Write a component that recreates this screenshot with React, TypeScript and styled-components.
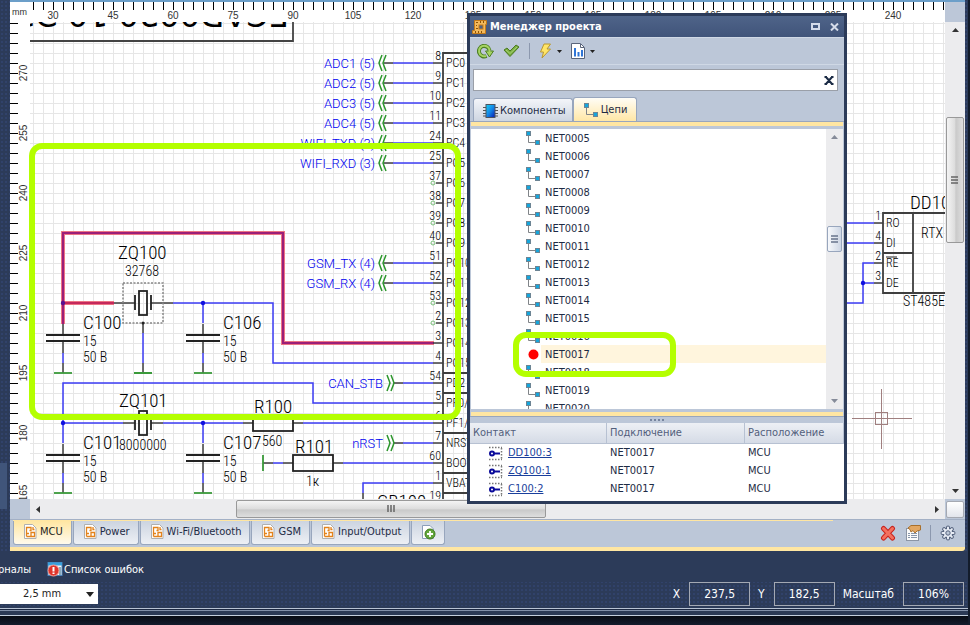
import React from "react";
import styled, { createGlobalStyle, css } from "styled-components";

const UI_FONT = `"DejaVu Sans Condensed", "Noto Sans", "DejaVu Sans", sans-serif`;
const CAD_FONT = `"Roboto Condensed", "Liberation Sans", sans-serif`;
const NET_FONT = `Roboto, "Liberation Sans", sans-serif`;

const GlobalStyle = createGlobalStyle`
  * { box-sizing: border-box; }
  body { margin: 0; background: #2c3b59; font: 11px/16px ${UI_FONT}; color: #1e2b45; overflow: hidden; }
  button, input, select { font: inherit; color: inherit; }
  button { padding: 0; border: 0; background: none; }
  svg { display: block; flex: none; }
`;

/* ---------- application frame ---------- */

const Frame = styled.div`
  position: relative;
  display: flex;
  flex-direction: column;
  height: 100vh;
  padding-left: 10px;
  border-right: 2px solid #131c2b;
  background-color: #2c3b59;
  background-image: radial-gradient(#31426a 1px, transparent 1px);
  background-size: 4px 4px;
  overflow: hidden;
`;

const Workspace = styled.main`
  flex: 1;
  min-height: 0;
  margin-right: 3px;
  display: grid;
  grid-template-columns: 20px minmax(0, 1fr) 20px;
  grid-template-rows: 20px minmax(0, 1fr) 20px;
  border-top: 2px solid #6c9fc9;
  background: #fff;
`;

const Unit = styled.div`
  font: 9px/20px "Liberation Sans", sans-serif;
  color: #333;
  padding-left: 2px;
`;

const Cell = styled.div`
  min-width: 0;
  min-height: 0;
  overflow: hidden;
`;

const Corner = styled.div`
  background: #bcc7d8;
  padding: 2px 1px 1px;
`;

const CornerButton = styled.div`
  height: 100%;
  border: 1px solid #a5a9b2;
  border-radius: 2px;
  background: linear-gradient(#fff, #e2e5ec);
`;

const Fill = styled.svg`
  width: 100%;
  height: 100%;
`;

/* ---------- scrollbars ---------- */

const Track = styled.div<{ $vertical?: boolean }>`
  display: flex;
  flex-direction: ${(p) => (p.$vertical ? "column" : "row")};
  background: #ececee;
  min-width: 0;
  min-height: 0;
  ${(p) => (p.$vertical ? "padding: 0 1px;" : "padding: 1px 0;")}
`;

const ArrowButton = styled.button`
  flex: 0 0 17px;
  display: flex;
  align-items: center;
  justify-content: center;
`;

const Gap = styled.div<{ $grow: number }>`
  flex: ${(p) => p.$grow} 1 0;
`;

const Thumb = styled.div<{ $grow: number; $vertical?: boolean; $cool?: boolean }>`
  flex: ${(p) => p.$grow} 1 0;
  display: flex;
  align-items: center;
  justify-content: center;
  border: 1px solid ${(p) => (p.$cool ? "#98a6bd" : "#999")};
  border-radius: 2px;
  background: linear-gradient(
    ${(p) => (p.$vertical ? "to right" : "to bottom")},
    ${(p) => (p.$cool ? "#f7f9fc, #cdd6e4" : "#f4f4f4, #dcdcdc 50%, #c9c9c9 55%, #dedede")}
  );
`;

type Dir = "up" | "down" | "left" | "right";
const ARROWS: Record<Dir, string> = {
  up: "M1 6L4.500 2L8 6Z",
  down: "M1 3L4.500 7L8 3Z",
  left: "M6 1L2 4.500L6 8Z",
  right: "M3 1L7 4.500L3 8Z",
};

function ScrollBar(props: { vertical?: boolean; cool?: boolean; parts: [number, number, number] }) {
  const { vertical, cool, parts } = props;
  const color = cool ? "#858b99" : "#333";
  const arrow = (d: Dir) => (
    <ArrowButton aria-label={`Scroll ${d}`}>
      <svg width="9" height="9"><path d={ARROWS[d]} fill={color} /></svg>
    </ArrowButton>
  );
  return (
    <Track $vertical={vertical}>
      {arrow(vertical ? "up" : "left")}
      <Gap $grow={parts[0]} />
      <Thumb $grow={parts[1]} $vertical={vertical} $cool={cool}>
        <svg width="8" height="8">
          <path
            d={vertical ? "M0 1H7M0 4H7M0 7H7" : "M1 0V7M4 0V7M7 0V7"}
            stroke={cool ? "#67748c" : "#666"}
            strokeWidth="1.500"
          />
        </svg>
      </Thumb>
      <Gap $grow={parts[2]} />
      {arrow(vertical ? "down" : "right")}
    </Track>
  );
}

/* ---------- rulers ---------- */

const RulerText = styled.text`
  font: 10px "Liberation Sans", sans-serif;
  fill: #333;
  text-anchor: middle;
`;

const range = (n: number) => Array.from({ length: n }, (_, i) => i);

function TopRuler() {
  return (
    <Fill>
      {range(92).map((i) => (
        <rect key={i} x={3 + i * 10} y="0" width="1" height="8" fill="#000" />
      ))}
      {range(15).map((i) => (
        <RulerText key={i} x={23 + i * 60} y="17">{30 + i * 15}</RulerText>
      ))}
    </Fill>
  );
}

function LeftRuler() {
  return (
    <Fill>
      {range(48).map((i) => (
        <rect key={i} x="0" y={1 + i * 10} width="8" height="1" fill="#000" />
      ))}
      {range(8).map((i) => (
        <RulerText key={i} transform={`translate(17 ${51 + i * 60}) rotate(-90)`}>{270 - i * 15}</RulerText>
      ))}
    </Fill>
  );
}

/* ---------- schematic ---------- */

const Label = styled.text<{ $size?: number; $net?: boolean; $end?: boolean }>`
  font-family: ${(p) => (p.$net ? NET_FONT : CAD_FONT)};
  font-size: ${(p) => p.$size ?? 14}px;
  font-weight: 300;
  fill: ${(p) => (p.$net ? "#0000f0" : "#000")};
  text-anchor: ${(p) => (p.$end ? "end" : "start")};
`;

const StampText = styled.text`
  font: 32px "DejaVu Sans", sans-serif;
  fill: #000;
`;

const PINS: [number, string, string, boolean][] = [
  [63, "8", "PC0", false], [83, "9", "PC1", false], [103, "10", "PC2", false], [123, "11", "PC3", false],
  [143, "24", "PC4", false], [163, "25", "PC5", false], [183, "37", "PC6", true], [203, "38", "PC7", true],
  [223, "39", "PC8", true], [243, "40", "PC9", true], [263, "51", "PC10", false], [283, "52", "PC11", false],
  [303, "53", "PC12", true], [323, "2", "PC13", true], [343, "3", "PC14", false], [363, "4", "PC15", false],
  [383, "54", "PD2", false], [403, "5", "PF0/", false], [423, "6", "PF1/", false], [443, "7", "NRST", false],
  [463, "60", "BOOT", false], [483, "1", "VBAT", false], [503, "19", "", false],
];

const INPUTS: [number, string][] = [
  [63, "ADC1 (5)"], [83, "ADC2 (5)"], [103, "ADC3 (5)"], [123, "ADC4 (5)"],
  [143, "WIFI_TXD (3)"], [163, "WIFI_RXD (3)"], [263, "GSM_TX (4)"], [283, "GSM_RX (4)"],
];

const CAPS: [number, number, string][] = [
  [63, 303, "C100"], [203, 303, "C106"], [63, 423, "C101"], [203, 423, "C107"],
];

const WIRE = "#3c3cf5";
const LEAD = "#3f3f3f";

function Capacitor({ x, y, name }: { x: number; y: number; name: string }) {
  const hot = name === "C100";
  return (
    <g>
      <path
        d={`${hot ? "" : `M${x} ${y}V${y + 20}`}M${x} ${y + 50}V${y + 60}`}
        stroke={WIRE}
        strokeWidth="1.500"
      />
      <path d={`M${x} ${y + 21}V${y + 32}M${x} ${y + 38}V${y + 50}M${x} ${y + 60}V${y + 70}`} stroke={LEAD} strokeWidth="1.500" />
      <path d={`M${x - 17} ${y + 32}h34M${x - 17} ${y + 38}h34`} stroke="#222" strokeWidth="1.800" />
      <path d={`M${x - 9} ${y + 70}h18`} stroke="#3a9a3a" strokeWidth="1.800" />
      <Label x={x + 20} y={y + 26} $size={19}>{name}</Label>
      <Label x={x + 20} y={y + 43}>15</Label>
      <Label x={x + 20} y={y + 59}>50 В</Label>
    </g>
  );
}

function Crystal({ y }: { y: number }) {
  return (
    <g stroke="#222" fill="none" strokeWidth="1.800">
      <path d={`M135 ${y - 8}v15M151 ${y - 8}v15`} />
      <rect x="139" y={y - 12} width="8" height="24" />
    </g>
  );
}

function Schematic() {
  return (
    <Fill>
      <defs>
        <pattern id="grid" width="10" height="10" patternUnits="userSpaceOnUse" x="3" y="1">
          <path d="M0 0.500H10M0.500 0V10" stroke="#e6e6e6" fill="none" />
        </pattern>
      </defs>
      <rect width="100%" height="100%" fill="url(#grid)" />
      <g transform="translate(-30 -22)" fill="none">
        <path d="M30 41H293V22" stroke="#444" strokeWidth="1.800" />
        <StampText transform="translate(289 4) rotate(180)">ЕСАD0020 10 ЭЗ</StampText>

        {/* nets */}
        <g stroke={WIRE} strokeWidth="1.500">
          <path d="M173 303H273V363H433M143 333V363" />
          <path d="M63 423V383H313V403H433M63 423H123M163 423H243M303 423H433" />
          <path d="M273 463H283M343 463H433M403 443H433M403 383H433M433 483H363V493" />
          {INPUTS.map(([y]) => <path key={y} d={`M393 ${y}H433`} />)}
          <path d="M840 223H874M840 243H874M874 263H863V303H840M863 283H874" />
        </g>
        <g stroke="#ed7484" strokeWidth="4">
          <path d="M63 324V233H283V343H434M63 303H114" />
        </g>
        <path d="M63 324V233H283V343H434" stroke="#9c1f78" strokeWidth="2" />
        <path d="M63 303H114" stroke="#c4285c" strokeWidth="2" />

        {/* leads */}
        <g stroke={LEAD} strokeWidth="1.500">
          <path d="M114 303H135M151 303H173M143 323V333M143 363V373" />
          <path d="M123 423H135M151 423H163M243 423H253M293 423H303" />
          <path d="M263 463H273M283 463H293M333 463H343M394 443H403M394 383H403M363 493V503" />
          {INPUTS.map(([y]) => <path key={y} d={`M384 ${y}H393`} />)}
          {PINS.map(([y, , , nc]) => <path key={y} d={`M${nc ? 436 : 433} ${y}H443`} />)}
          <path d="M874 223H883M874 243H883M874 263H883M874 283H883" />
        </g>
        <path d="M134 373H152M263 455V471" stroke="#3a9a3a" strokeWidth="1.800" />
        <rect x="123" y="283" width="40" height="40" stroke="#888" strokeWidth="1.500" strokeDasharray="2 1.500" />
        <Crystal y={303} />
        <Crystal y={423} />
        {CAPS.map(([x, y, name]) => <Capacitor key={name} x={x} y={y} name={name} />)}
        <g stroke="#222" strokeWidth="1.800">
          <rect x="253" y="415" width="40" height="16" />
          <rect x="293" y="455" width="40" height="16" />
        </g>
        <g fill="#1010e0">
          <circle cx="203" cy="303" r="2.200" />
          <circle cx="63" cy="423" r="2.200" />
          <circle cx="203" cy="423" r="2.200" />
          <circle cx="863" cy="283" r="2.200" />
          <circle cx="63" cy="303" r="2.200" fill="#5a1090" />
        </g>
        <circle cx="143" cy="323" r="1.500" fill="#222" />

        {/* off-sheet connectors */}
        <g stroke="#2c962c" strokeWidth="1.500">
          {INPUTS.map(([y]) => (
            <path key={y} d={`M382 ${y - 8}Q380 ${y - 3} 379 ${y}Q380 ${y + 3} 382 ${y + 8}M386 ${y - 8}Q384 ${y - 3} 383 ${y}Q384 ${y + 3} 386 ${y + 8}`} />
          ))}
          {[383, 443].map((y) => (
            <path key={y} d={`M387 ${y - 8}Q389 ${y - 3} 390 ${y}Q389 ${y + 3} 387 ${y + 8}M391 ${y - 8}Q393 ${y - 3} 394 ${y}Q393 ${y + 3} 391 ${y + 8}`} />
          ))}
        </g>
        {INPUTS.map(([y, name]) => <Label key={name} x="375" y={y + 5} $size={13} $net $end>{name}</Label>)}
        <Label x="383" y="388" $size={13} $net $end>CAN_STB</Label>
        <Label x="383" y="448" $size={13} $net $end>nRST</Label>

        {/* controller */}
        <path d="M500 53H443V520M443 373H500M443 393H500M443 433H500M443 473H500M443 493H500" stroke={LEAD} strokeWidth="1.800" />
        {PINS.map(([y, num, name, nc]) => (
          <g key={y}>
            {nc && <circle cx="433" cy={y} r="2" stroke="#7cc07c" />}
            <Label x="441" y={y - 3} $size={12} $end>{num}</Label>
            <Label x="446" y={y + 4} $size={12}>{name}</Label>
          </g>
        ))}

        <Label x="118" y="259" $size={19}>ZQ100</Label>
        <Label x="125" y="276">32768</Label>
        <Label x="119" y="407" $size={19}>ZQ101</Label>
        <Label x="119" y="450">8000000</Label>
        <Label x="254" y="413" $size={19}>R100</Label>
        <Label x="262" y="446">560</Label>
        <Label x="295" y="453" $size={19}>R101</Label>
        <Label x="306" y="486">1к</Label>
        <Label x="377" y="508" $size={19}>GB100</Label>

        {/* transceiver */}
        <path d="M950 213H883V293H950M913 213V293M883 253H913" stroke={LEAD} strokeWidth="1.800" />
        <Label x="910" y="209" $size={19}>DD101</Label>
        <Label x="921" y="238">RTX</Label>
        <Label x="903" y="306">ST485EB</Label>
        {[["1", "RO"], ["4", "DI"], ["2", "RE"], ["3", "DE"]].map(([num, name], i) => (
          <g key={name}>
            <Label x="881" y={220 + i * 20} $size={12} $end>{num}</Label>
            <Label x="886" y={227 + i * 20} $size={12}>{name}</Label>
          </g>
        ))}
        <path d="M886 257H897" stroke="#222" />

        {/* cursor */}
        <g stroke="#a07f7f">
          <path d="M852 418.500H912M881.500 389V449" />
          <rect x="875.500" y="412.500" width="12" height="12" />
        </g>
      </g>
    </Fill>
  );
}

const Highlight = styled.div`
  position: absolute;
  border: 6px solid #b4ff00;
  border-radius: 13px;
  pointer-events: none;
`;

const CircuitHighlight = styled(Highlight)`
  left: 29px;
  top: 143px;
  width: 432px;
  height: 277px;
`;

const NetHighlight = styled(Highlight)`
  left: 513px;
  top: 332px;
  width: 163px;
  height: 45px;
`;

/* ---------- sheet tabs ---------- */

const SheetBar = styled.div`
  display: flex;
  align-items: flex-start;
  height: 32px;
  margin-right: 3px;
  padding-left: 3px;
  background: #bcc7d8;
  border-top: 1px solid #a3b0c5;
  border-bottom: 4px solid #ffe6a2;
  border-radius: 0 0 3px 0;
`;

const SheetTabs = styled.nav`
  flex: 0 1 820px;
  display: flex;
  gap: 1px;
  border-top: 1px solid #ffe6a2;
`;

const SheetTab = styled.button<{ $active?: boolean }>`
  display: flex;
  align-items: center;
  gap: 3px;
  height: 24px;
  padding: 0 8px 2px 9px;
  white-space: nowrap;
  border: 1px solid #98a6bd;
  border-top: 0;
  border-radius: 0 0 3px 3px;
  background: linear-gradient(#ccd4e0, #edf0f5);
  ${(p) => p.$active && css`background: linear-gradient(#ffe6a2, #fffaec); color: #222;`}
`;

const SheetTools = styled.div`
  margin-left: auto;
  display: flex;
  align-items: center;
  gap: 9px;
  height: 26px;
  padding-right: 9px;
`;

const Separator = styled.div`
  width: 1px;
  height: 16px;
  background: #8c98ae;
`;

const SheetIcon = () => (
  <svg width="14" height="15" viewBox="0 0 14 15">
    <path d="M1.500 0.500H9.500L13 4V14.500H1.500Z" fill="#fff" stroke="#b0b0b0" />
    <path d="M3.500 12.500V3.500H8V6.500H6.500M3.500 9.500H6M3.500 12.500H11.500V8.500H8V12M10 3V5.500H11.500" fill="none" stroke="#e3831c" strokeWidth="1.300" />
  </svg>
);

const AddSheetIcon = () => (
  <svg width="15" height="16" viewBox="0 0 15 16">
    <path d="M1.500 1.500H9L12.500 5V14.500H1.500Z" fill="#fff" stroke="#8c9db8" />
    <circle cx="9" cy="10" r="5" fill="#62a63a" stroke="#3f7c20" />
    <path d="M9 7V13M6 10H12" stroke="#fff" strokeWidth="1.800" />
  </svg>
);

const DeleteIcon = () => (
  <svg width="16" height="16" viewBox="0 0 16 16">
    <path d="M3.500 3.500L12.500 13M12.500 3.500L3.500 13" stroke="#c7241e" strokeWidth="5" strokeLinecap="round" />
    <path d="M3.500 3.500L12.500 13M12.500 3.500L3.500 13" stroke="#f4705f" strokeWidth="3" strokeLinecap="round" />
  </svg>
);

const PropertiesIcon = () => (
  <svg width="16" height="16" viewBox="0 0 16 16">
    <rect x="1.500" y="3.500" width="12" height="12" fill="#fbfbfb" stroke="#8b95a5" />
    <path d="M3 8.500h2M6 8.500h6M3 10.500h2M6 10.500h6M3 12.500h2M6 12.500h6" stroke="#8795aa" />
    <path d="M3 3L6 0.500H15.500V5L12 6L10 8L8 5.500L6 7L5 4.500Z" fill="#e2a763" stroke="#a8702d" />
  </svg>
);

const GearIcon = () => (
  <svg width="16" height="16" viewBox="0 0 16 16">
    <g stroke="#56647e" strokeWidth="4" strokeLinecap="round">
      <path d="M8 2.500V13.500M2.500 8H13.500M4.100 4.100L11.900 11.900M11.900 4.100L4.100 11.900" />
    </g>
    <g stroke="#e8edf6" strokeWidth="2" strokeLinecap="round">
      <path d="M8 2.500V13.500M2.500 8H13.500M4.100 4.100L11.900 11.900M11.900 4.100L4.100 11.900" />
    </g>
    <circle cx="8" cy="8" r="4" fill="#e8edf6" />
    <circle cx="8" cy="8" r="2.200" fill="#bcc7d8" stroke="#56647e" />
  </svg>
);

/* ---------- bottom bars ---------- */

const DockBar = styled.div`
  display: flex;
  align-items: center;
  gap: 16px;
  height: 31px;
  margin-left: -12px;
  padding-top: 6px;
  background: #2c3b59;
  color: #fff;
`;

const DockButton = styled.button`
  display: flex;
  align-items: center;
  gap: 1px;
`;

const StatusBar = styled.div`
  display: flex;
  align-items: center;
  height: 24px;
  margin: 0 4px 0 -10px;
  color: #fff;
`;

const UnitSelect = styled.label`
  position: relative;
  margin-right: auto;
  color: #222;
  select {
    display: block;
    appearance: none;
    width: 98px;
    height: 20px;
    padding: 0 0 0 23px;
    border: 0;
    border-radius: 0;
    background: #fff;
  }
  svg {
    position: absolute;
    right: 4px;
    top: 8px;
  }
`;

const Coordinate = styled.label`
  display: flex;
  align-items: center;
  gap: 9px;
  margin-left: 8px;
  font-size: 12px;
  input {
    width: 61px;
    height: 24px;
    padding: 0;
    text-align: center;
    color: #fff;
    border: 1px solid #a3a8b3;
    background: transparent;
  }
`;

const WindowEdge = styled.div`
  height: 19px;
  margin-left: -10px;
  background: linear-gradient(
    #2c3b59 2px, #b7c2d3 2px, #b7c2d3 3px, #1d2942 3px, #1d2942 4px,
    #8190a8 4px, #8190a8 5px, #2b3a55 5px, #2b3a55 9px,
    #c3cfdd 9px, #c3cfdd 10px, #070b12 10px, #131c2d 19px
  );
`;

const SideTab = styled.div`
  position: absolute;
  left: 0;
  top: 463px;
  width: 7px;
  height: 46px;
  background: #40557a;
`;

const ErrorIcon = () => (
  <svg width="16" height="15" viewBox="0 0 16 15">
    <rect x="1" y="0.500" width="14" height="13" fill="#f3f6fa" stroke="#4b82b8" />
    <path d="M1 2H15" stroke="#36a0dc" strokeWidth="3" />
    <path d="M13 5V13" stroke="#8ab" strokeWidth="2" />
    <circle cx="6.500" cy="8.500" r="5.500" fill="#e0352c" stroke="#f2a29a" />
    <path d="M6.500 5V9.500M6.500 10.500V12" stroke="#fff" strokeWidth="2" />
  </svg>
);

/* ---------- project manager ---------- */

const Dialog = styled.section`
  position: absolute;
  left: 467px;
  top: 13px;
  width: 380px;
  height: 491px;
  display: flex;
  flex-direction: column;
  border: 3px solid #2c3b59;
  background: #bcc7d8;
`;

const TitleBar = styled.header`
  display: flex;
  align-items: center;
  gap: 3px;
  flex: 0 0 21px;
  padding: 0 2px;
  background: linear-gradient(#4f6489, #40547a);
  color: #fff;
  h1 { margin: 0 auto 0 0; font: bold 11px/20px ${UI_FONT}; }
`;

const TitleButton = styled.button`
  width: 16px;
  display: flex;
  justify-content: center;
`;

const Toolbar = styled.div`
  display: flex;
  align-items: center;
  gap: 9px;
  flex: 0 0 28px;
  padding: 0 7px;
  border-top: 1px solid #cfd8e5;
  border-bottom: 1px solid #cfd8e5;
`;

const ToolButton = styled.button`
  display: flex;
  align-items: center;
  gap: 5px;
`;

const Search = styled.div`
  display: flex;
  align-items: center;
  flex: 0 0 22px;
  margin: 4px 6px 6px 3px;
  padding-right: 3px;
  border: 1px solid #9a9fa8;
  background: #fff;
  input {
    flex: 1;
    min-width: 0;
    border: 0;
    outline: 0;
    background: none;
  }
`;

const PanelTabs = styled.div`
  display: flex;
  align-items: flex-end;
  flex: 0 0 25px;
  padding-left: 3px;
`;

const PanelTab = styled.button<{ $active?: boolean }>`
  display: flex;
  align-items: center;
  gap: 2px;
  height: 24px;
  padding: 0 6px 0 9px;
  border: 1px solid #98a6bd;
  border-bottom: 0;
  border-radius: 3px 3px 0 0;
  background: linear-gradient(#f3f5f9, #ccd4e0);
  ${(p) => p.$active && css`height: 25px; padding-right: 9px; background: linear-gradient(#fffdf6, #ffe6a2);`}
`;

const Stripe = styled.div<{ $bottom?: boolean }>`
  flex: 0 0 7px;
  border: 0 solid #bcc7d8;
  border-width: ${(p) => (p.$bottom ? "3px 1px 0" : "0 1px 3px")};
  background: #ffe6a2;
  box-shadow: 0 ${(p) => (p.$bottom ? 1 : -1)}px #98a6bd;
`;

const NetPane = styled.div`
  flex: 1;
  min-height: 0;
  display: flex;
  margin: 0 1px;
`;

const NetList = styled.ul`
  flex: 1;
  margin: 0;
  padding: 0 0 0 54px;
  list-style: none;
  overflow: hidden;
  background: #fff;
`;

const NetRow = styled.li<{ $selected?: boolean }>`
  display: flex;
  align-items: center;
  height: 18px;
  span {
    flex: 1;
    height: 18px;
    padding: 1px 0 0 4px;
    line-height: 18px;
    background: ${(p) => (p.$selected ? "#fff5dd" : "none")};
  }
`;

const PaneScroll = styled.div`
  width: 17px;
  display: grid;
`;

const Splitter = styled.div`
  flex: 0 0 7px;
  display: flex;
  align-items: center;
  justify-content: center;
`;

const ContactTable = styled.table`
  flex: 0 0 78px;
  display: block;
  background: #fff;
  border-spacing: 0;
  thead, tbody { display: block; }
  tr { display: grid; grid-template-columns: 137px 138px 1fr; }
  th {
    padding: 0 3px;
    height: 21px;
    line-height: 20px;
    text-align: left;
    font-weight: normal;
    color: #53607c;
    border-right: 1px solid #b7c1d2;
    border-bottom: 1px solid #b7c1d2;
    background: linear-gradient(#edf0f5, #d5dbe6);
  }
  td { padding: 0 3px; height: 18px; line-height: 18px; }
`;

const ContactCell = styled.td`
  display: flex;
  align-items: center;
  gap: 5px;
  && { padding-left: 18px; }
  a { color: #1a3f9c; }
`;

const NetIcon = () => (
  <svg width="16" height="16" viewBox="0 0 16 16">
    <path d="M3.500 3V12.500H12" fill="none" stroke="#808488" />
    <rect x="1.500" y="1.500" width="4" height="4" fill="#16a6dc" stroke="#6c8494" />
    <rect x="10.500" y="10.500" width="4" height="4" fill="#16a6dc" stroke="#6c8494" />
  </svg>
);

const SelectedIcon = () => (
  <svg width="16" height="16" viewBox="0 0 16 16"><circle cx="8.500" cy="8.500" r="5" fill="#f00" /></svg>
);

const ContactIcon = () => (
  <svg width="15" height="15" viewBox="0 0 15 15">
    <path d="M1 1.500H14M1 13.500H14M13.500 2V14" stroke="#777" strokeWidth="1.500" strokeDasharray="1.500 1.500" />
    <circle cx="4" cy="7.500" r="2" fill="#fff" stroke="#0a0a9a" strokeWidth="2" />
    <path d="M6 7.500H12" stroke="#0a0a9a" strokeWidth="2" />
  </svg>
);

const ProjectIcon = () => (
  <svg width="15" height="16" viewBox="0 0 15 16">
    <path d="M2.500 1.500H14.500V5.500H13.500V14.500H0.500V11.500H2.500Z" fill="#f2b95c" stroke="#c57a17" />
    <path d="M4 3.500h2M4 6.500h1M4 9.500h2M8.500 2V4M11.500 2V4M3.500 12V14M6.500 12V14M9.500 12V14" stroke="#8c5207" />
    <rect x="7" y="6" width="4" height="4" fill="#4d6288" stroke="#c57a17" />
  </svg>
);

const RefreshIcon = () => (
  <svg width="17" height="16" viewBox="0 0 17 16">
    <path d="M9.500 13A5.300 5.300 0 1 1 12.500 7.500" fill="none" stroke="#4d7f24" strokeWidth="4" />
    <path d="M8.500 8H16.500L12.500 14Z" fill="#a6d464" stroke="#4d7f24" />
    <path d="M9 13A5.300 5.300 0 1 1 12.500 9" fill="none" stroke="#a6d464" strokeWidth="2" />
  </svg>
);

const CheckIcon = () => (
  <svg width="17" height="14" viewBox="0 0 17 14">
    <path d="M1 6L4 4L7 7L13 1L16 3L7 12.500Z" fill="#78ad40" stroke="#4b7a20" strokeLinejoin="round" />
    <path d="M3 6L7 9.500L14 3" fill="none" stroke="#a9d276" />
  </svg>
);

const LightningIcon = () => (
  <svg width="13" height="16" viewBox="0 0 13 16">
    <path d="M5 1H11.500L8 6H11.500L3 15L4.500 9H1.500Z" fill="#ffe566" stroke="#b99831" strokeLinejoin="round" />
  </svg>
);

const ReportIcon = () => (
  <svg width="14" height="16" viewBox="0 0 14 16">
    <path d="M0.500 0.500H9.500L13.500 4.500V15.500H0.500Z" fill="#fff" stroke="#59647a" />
    <path d="M9.500 1V4.500H13" fill="none" stroke="#59647a" />
    <path d="M4 13.500V5M7.500 13.500V9M11 13.500V7" stroke="#2f75d6" strokeWidth="2" />
  </svg>
);

const DropIcon = () => <svg width="5" height="3"><path d="M0 0H5L2.500 3Z" fill="#222" /></svg>;

const ChipIcon = () => (
  <svg width="15" height="14" viewBox="0 0 15 14">
    <defs>
      <linearGradient id="chip" x2="1" y2="1"><stop stopColor="#18d0f0" /><stop offset=".5" stopColor="#1288e8" /><stop offset="1" stopColor="#0818b0" /></linearGradient>
    </defs>
    <path d="M0 3.500H15M0 6.500H15M0 9.500H15M0 12H15" stroke="#555" />
    <rect x="3" y="0.500" width="9" height="13" fill="url(#chip)" stroke="#4a5260" />
  </svg>
);

const NETS = range(16).map((i) => `NET${String(i + 5).padStart(4, "0")}`);

function ProjectManager() {
  return (
    <Dialog>
      <TitleBar>
        <ProjectIcon />
        <h1>Менеджер проекта</h1>
        <TitleButton aria-label="Развернуть">
          <svg width="9" height="7"><rect x="1" y="1" width="7" height="5" fill="none" stroke="#d5dcea" strokeWidth="2" /></svg>
        </TitleButton>
        <TitleButton aria-label="Закрыть">
          <svg width="9" height="8"><path d="M1 0.500L8 7.500M8 0.500L1 7.500" stroke="#d5dcea" strokeWidth="2" /></svg>
        </TitleButton>
      </TitleBar>
      <Toolbar>
        <ToolButton aria-label="Обновить"><RefreshIcon /></ToolButton>
        <ToolButton aria-label="Применить"><CheckIcon /></ToolButton>
        <Separator />
        <ToolButton aria-label="Действия"><LightningIcon /><DropIcon /></ToolButton>
        <ToolButton aria-label="Отчёты"><ReportIcon /><DropIcon /></ToolButton>
      </Toolbar>
      <Search>
        <input type="text" aria-label="Поиск" />
        <button aria-label="Очистить">
          <svg width="10" height="9"><path d="M0.500 1H3M7 1H9.500M0.500 8H3M7 8H9.500M2 1L8 8M8 1L2 8" fill="none" stroke="#1c2c46" strokeWidth="2" /></svg>
        </button>
      </Search>
      <PanelTabs role="tablist">
        <PanelTab role="tab"><ChipIcon />Компоненты</PanelTab>
        <PanelTab role="tab" $active><NetIcon />Цепи</PanelTab>
      </PanelTabs>
      <Stripe />
      <NetPane>
        <NetList>
          {NETS.map((net) => {
            const selected = net === "NET0017";
            return (
              <NetRow key={net} $selected={selected}>
                {selected ? <SelectedIcon /> : <NetIcon />}
                <span>{net}</span>
              </NetRow>
            );
          })}
        </NetList>
        <PaneScroll><ScrollBar vertical cool parts={[80, 24, 140]} /></PaneScroll>
      </NetPane>
      <Stripe $bottom />
      <Splitter>
        <svg width="15" height="2"><path d="M0 1H15" stroke="#77859f" strokeWidth="2" strokeDasharray="2 2" /></svg>
      </Splitter>
      <ContactTable>
        <thead>
          <tr><th>Контакт</th><th>Подключение</th><th>Расположение</th></tr>
        </thead>
        <tbody>
          {["DD100:3", "ZQ100:1", "C100:2"].map((pin) => (
            <tr key={pin}>
              <ContactCell><ContactIcon /><a href="#pin">{pin}</a></ContactCell>
              <td>NET0017</td>
              <td>MCU</td>
            </tr>
          ))}
        </tbody>
      </ContactTable>
    </Dialog>
  );
}

export default function App() {
  return (
    <>
      <GlobalStyle />
      <Frame>
        <Workspace>
          <Unit>mm</Unit>
          <Cell><TopRuler /></Cell>
          <Corner />
          <Cell><LeftRuler /></Cell>
          <Cell><Schematic /></Cell>
          <ScrollBar vertical parts={[78, 124, 239]} />
          <Corner />
          <ScrollBar parts={[189, 309, 383]} />
          <Corner><CornerButton /></Corner>
        </Workspace>
        <SheetBar>
          <SheetTabs>
            {["MCU", "Power", "Wi-Fi/Bluetooth", "GSM", "Input/Output"].map((name, i) => (
              <SheetTab key={name} $active={i === 0}><SheetIcon />{name}</SheetTab>
            ))}
            <SheetTab aria-label="Добавить лист"><AddSheetIcon /></SheetTab>
          </SheetTabs>
          <SheetTools>
            <button aria-label="Удалить"><DeleteIcon /></button>
            <button aria-label="Свойства"><PropertiesIcon /></button>
            <Separator />
            <button aria-label="Настройки"><GearIcon /></button>
          </SheetTools>
        </SheetBar>
        <DockBar>
          <DockButton>рналы</DockButton>
          <DockButton><ErrorIcon />Список ошибок</DockButton>
        </DockBar>
        <StatusBar>
          <UnitSelect>
            <select aria-label="Шаг сетки"><option>2,5 mm</option></select>
            <svg width="8" height="5"><path d="M0 0H8L4 5Z" fill="#222" /></svg>
          </UnitSelect>
          <Coordinate>X<input readOnly value="237,5" /></Coordinate>
          <Coordinate>Y<input readOnly value="182,5" /></Coordinate>
          <Coordinate>Масштаб<input readOnly value="106%" /></Coordinate>
        </StatusBar>
        <WindowEdge />
        <SideTab />
        <CircuitHighlight />
        <ProjectManager />
        <NetHighlight />
      </Frame>
    </>
  );
}
